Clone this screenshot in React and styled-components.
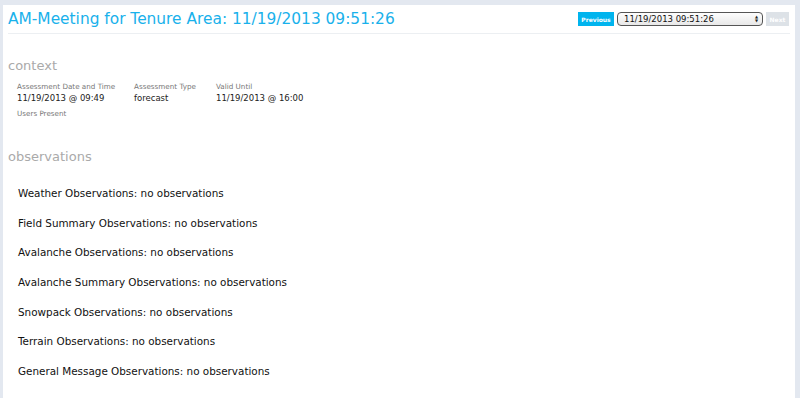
import React from 'react';
import styled, { createGlobalStyle } from 'styled-components';

const GlobalStyle = createGlobalStyle`
	html, body {
		margin: 0;
		padding: 0;
		background: #e3e8f0;
	}
	body {
		font-family: "DejaVu Sans", Verdana, sans-serif;
	}
`

const Page = styled.div`
	padding: 5px 5px 0 3px;
	height: 398px;
	box-sizing: border-box;
	overflow: hidden;
`

const Panel = styled.div`
	background: #ffffff;
	height: 100%;
	padding: 0 5px 0 5px;
`

const Header = styled.div`
	display: flex;
	justify-content: space-between;
	align-items: center;
	height: 28px;
	border-bottom: 1px solid #eceff2;
`

const Title = styled.h1`
	margin: 0;
	font-size: 15.4px;
	font-weight: 400;
	color: #19b1eb;
	white-space: nowrap;
`

const Nav = styled.div`
	display: flex;
	align-items: center;
	gap: 3px;
	margin-right: 1px;
`

const NavButton = styled.button`
	width: ${p => p.w}px;
	height: 14px;
	padding: 0;
	border: none;
	border-radius: 0;
	font-family: inherit;
	font-size: 6px;
	font-weight: 700;
	color: #ffffff;
	background: ${p => (p.disabled ? '#dde2e7' : '#00b4ee')};
	cursor: ${p => (p.disabled ? 'default' : 'pointer')};
`

const DateSelect = styled.div`
	display: flex;
	align-items: center;
	justify-content: space-between;
	width: 146px;
	height: 14px;
	box-sizing: border-box;
	padding: 0 4px 0 6px;
	border: 1px solid #555;
	border-radius: 4px;
	background: linear-gradient(#fdfdfd, #e8e8e8);
	font-size: 8.5px;
	color: #111;
`

const Arrows = styled.span`
	display: flex;
	flex-direction: column;
	font-size: 4px;
	line-height: 4px;
	color: #222;
`

const Section = styled.div`
	padding-top: ${p => p.top}px;
`

const SectionTitle = styled.h2`
	margin: 0;
	font-size: 13px;
	font-weight: 400;
	color: #aaaaaa;
`

const ContextGrid = styled.div`
	display: grid;
	grid-template-columns: 117px 82px auto;
	padding: 8px 0 0 9px;
`

const Field = styled.div`
	display: flex;
	flex-direction: column;
`

const Label = styled.span`
	font-size: 7.2px;
	color: #777777;
	line-height: 11px;
`

const Value = styled.span`
	font-size: 8.5px;
	color: #222222;
	line-height: 13px;
	padding-bottom: 3px;
`

const ObsList = styled.div`
	display: flex;
	flex-direction: column;
	padding: 22px 0 0 10px;
`

const ObsItem = styled.div`
	font-size: 10.4px;
	color: #111111;
	height: 29.7px;
	line-height: 14px;
`

const observations = [
	'Weather Observations',
	'Field Summary Observations',
	'Avalanche Observations',
	'Avalanche Summary Observations',
	'Snowpack Observations',
	'Terrain Observations',
	'General Message Observations',
]

const App = () => {
	return (
		<React.Fragment>
			<GlobalStyle />
			<Page>
				<Panel>
					<Header>
						<Title>AM-Meeting for Tenure Area: 11/19/2013 09:51:26</Title>
						<Nav>
							<NavButton w={36}>Previous</NavButton>
							<DateSelect>
								<span>11/19/2013 09:51:26</span>
								<Arrows><span>▲</span><span>▼</span></Arrows>
							</DateSelect>
							<NavButton w={23} disabled>Next</NavButton>
						</Nav>
					</Header>
					<Section top={24}>
						<SectionTitle>context</SectionTitle>
						<ContextGrid>
							<Field>
								<Label>Assessment Date and Time</Label>
								<Value>11/19/2013 @ 09:49</Value>
							</Field>
							<Field>
								<Label>Assessment Type</Label>
								<Value>forecast</Value>
							</Field>
							<Field>
								<Label>Valid Until</Label>
								<Value>11/19/2013 @ 16:00</Value>
							</Field>
							<Field>
								<Label>Users Present</Label>
							</Field>
						</ContextGrid>
					</Section>
					<Section top={30}>
						<SectionTitle>observations</SectionTitle>
						<ObsList>
							{observations.map(name => (
								<ObsItem key={name}>{name}: no observations</ObsItem>
							))}
						</ObsList>
					</Section>
				</Panel>
			</Page>
		</React.Fragment>
	);
};

export default App
